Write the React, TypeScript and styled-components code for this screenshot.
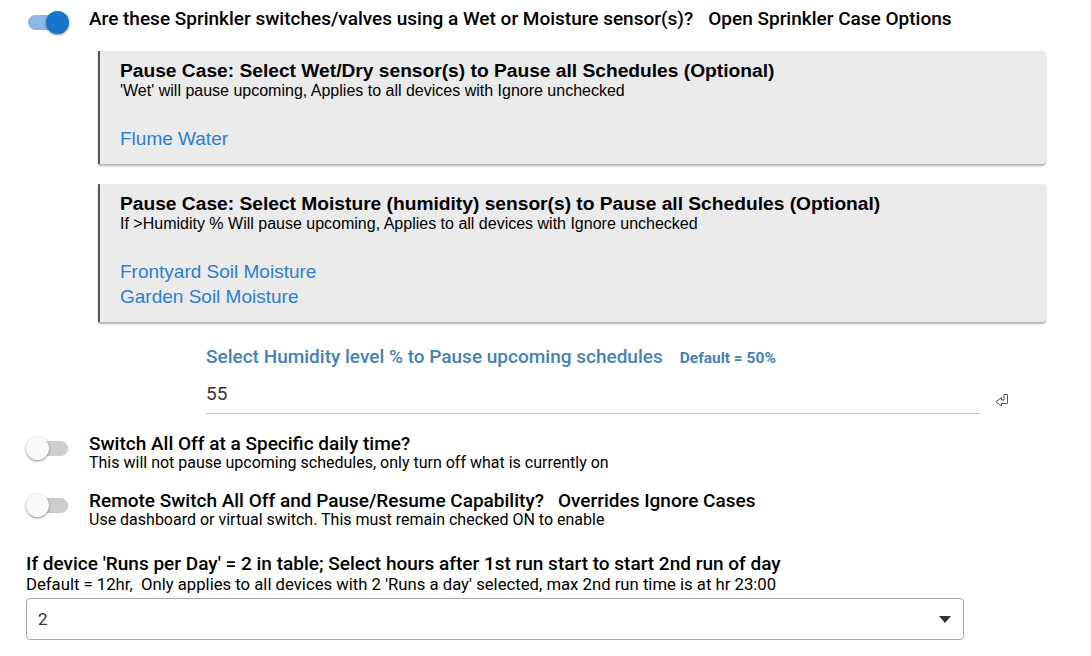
import styled, { createGlobalStyle } from 'styled-components'

const GlobalStyle = createGlobalStyle`
  body {
    margin: 0;
    background: #ffffff;
    font-family: Roboto, 'Liberation Sans', sans-serif;
    color: #000000;
  }
`

const Page = styled.div`
  width: 1091px;
  height: 656px;
  overflow: hidden;
  padding-top: 7px;
  box-sizing: border-box;
`

const SwitchRow = styled.div<{ $mt?: number }>`
  display: flex;
  align-items: flex-start;
  padding-left: 26px;
  margin-top: ${p => p.$mt ?? 0}px;
`

const Toggle = styled.div`
  position: relative;
  flex: none;
  width: 44px;
  height: 24px;
  margin-top: 3px;
  margin-right: 19px;
`

const Track = styled.div<{ $on?: boolean }>`
  position: absolute;
  left: 2px;
  top: 5px;
  width: 40px;
  height: 15px;
  border-radius: 8px;
  background: ${p => (p.$on ? '#8bb8e6' : '#cdcdcd')};
`

const Thumb = styled.div<{ $on?: boolean }>`
  position: absolute;
  top: 1px;
  left: ${p => (p.$on ? '20px' : '0px')};
  width: 23px;
  height: 23px;
  border-radius: 50%;
  background: ${p => (p.$on ? '#1a73cc' : '#fafafa')};
  box-shadow: 0 1px 3px rgba(0, 0, 0, 0.35), 0 1px 1px rgba(0, 0, 0, 0.14);
`

const SwitchText = styled.div`
  display: flex;
  flex-direction: column;
`

const SwitchTitle = styled.div<{ $lh?: number }>`
  font-size: 19px;
  font-weight: 500;
  line-height: ${p => p.$lh ?? 22}px;
  white-space: nowrap;
`

const Spacer = styled.span<{ $w: number }>`
  display: inline-block;
  width: ${p => p.$w}px;
`

const SwitchSub = styled.div`
  font-size: 16px;
  line-height: 16px;
  white-space: nowrap;
`

const Cards = styled.div`
  display: flex;
  flex-direction: column;
  gap: 20px;
  margin: 17px 0 0 98px;
  width: 948px;
`

const Card = styled.div`
  background: #ebebeb;
  border-left: 2px solid #555555;
  border-radius: 0 4px 4px 0;
  box-shadow: 0 2px 2px rgba(0, 0, 0, 0.3);
  padding: 9px 20px 13px 20px;
  font-family: 'Liberation Sans', Arial, sans-serif;
`

const CardTitle = styled.div`
  font-size: 19.2px;
  font-weight: 700;
  line-height: 21px;
  white-space: nowrap;
`

const CardSub = styled.div`
  font-size: 16px;
  line-height: 20px;
  white-space: nowrap;
`

const DeviceList = styled.div`
  margin-top: 25px;
  display: flex;
  flex-direction: column;
`

const Device = styled.div`
  font-size: 19px;
  line-height: 25px;
  color: #2a7fd4;
`

const Field = styled.div`
  margin: 23px 0 0 206px;
  display: flex;
  align-items: flex-end;
`

const FieldBody = styled.div`
  width: 774px;
`

const FieldLabel = styled.div`
  font-size: 19px;
  font-weight: 500;
  line-height: 24px;
  color: #4682b4;
  white-space: nowrap;
`

const FieldHint = styled.span`
  font-size: 15.5px;
  font-weight: 700;
  margin-left: 17px;
`

const FieldInput = styled.div`
  margin-top: 12px;
  font-size: 19px;
  line-height: 24px;
  color: #333333;
  padding-bottom: 7px;
  border-bottom: 1px solid #c0c0c0;
`

const EnterIcon = styled.svg`
  width: 14px;
  height: 14px;
  margin: 0 0 7px 15px;
`

const Section = styled.div`
  margin: 25px 0 0 26px;
`

const SectionTitle = styled.div`
  font-size: 19px;
  font-weight: 500;
  line-height: 22px;
  white-space: nowrap;
`

const SectionSub = styled.div`
  margin-top: 2px;
  font-size: 16.7px;
  line-height: 16px;
  white-space: pre;
`

const Select = styled.div`
  margin-top: 5px;
  width: 938px;
  height: 42px;
  box-sizing: border-box;
  border: 1px solid #a8a8a8;
  border-radius: 4px;
  display: flex;
  align-items: center;
  justify-content: space-between;
  padding: 0 12px 0 11px;
  font-size: 17px;
  color: #333333;
`

const Caret = styled.svg`
  width: 12px;
  height: 7px;
`

type SwitchProps = { on?: boolean }

function Switch({ on }: SwitchProps) {
  return (
    <Toggle>
      <Track $on={on} />
      <Thumb $on={on} />
    </Toggle>
  )
}

const cards = [
  {
    title: 'Pause Case: Select Wet/Dry sensor(s) to Pause all Schedules (Optional)',
    sub: "'Wet' will pause upcoming, Applies to all devices with Ignore unchecked",
    devices: ['Flume Water']
  },
  {
    title: 'Pause Case: Select Moisture (humidity) sensor(s) to Pause all Schedules (Optional)',
    sub: 'If >Humidity % Will pause upcoming, Applies to all devices with Ignore unchecked',
    devices: ['Frontyard Soil Moisture', 'Garden Soil Moisture']
  }
]

export default function App() {
  return (
    <Page>
      <GlobalStyle />
      <SwitchRow>
        <Switch on />
        <SwitchTitle $lh={24}>
          Are these Sprinkler switches/valves using a Wet or Moisture sensor(s)?<Spacer $w={15} />Open Sprinkler Case Options
        </SwitchTitle>
      </SwitchRow>

      <Cards>
        {cards.map(c => (
          <Card key={c.title}>
            <CardTitle>{c.title}</CardTitle>
            <CardSub>{c.sub}</CardSub>
            <DeviceList>
              {c.devices.map(d => (
                <Device key={d}>{d}</Device>
              ))}
            </DeviceList>
          </Card>
        ))}
      </Cards>

      <Field>
        <FieldBody>
          <FieldLabel>
            Select Humidity level % to Pause upcoming schedules<FieldHint>Default = 50%</FieldHint>
          </FieldLabel>
          <FieldInput>55</FieldInput>
        </FieldBody>
        <EnterIcon viewBox='0 0 14 14'>
          <polygon
            points='9,1.5 12.5,1.5 12.5,10.5 6.5,10.5 6.5,13 1,8.7 6.5,4.5 6.5,7 9,7'
            fill='#ffffff'
            stroke='#555555'
            strokeWidth='1'
          />
        </EnterIcon>
      </Field>

      <SwitchRow $mt={19}>
        <Switch />
        <SwitchText>
          <SwitchTitle>Switch All Off at a Specific daily time?</SwitchTitle>
          <SwitchSub>This will not pause upcoming schedules, only turn off what is currently on</SwitchSub>
        </SwitchText>
      </SwitchRow>

      <SwitchRow $mt={19}>
        <Switch />
        <SwitchText>
          <SwitchTitle>
            Remote Switch All Off and Pause/Resume Capability?<Spacer $w={14} />Overrides Ignore Cases
          </SwitchTitle>
          <SwitchSub>Use dashboard or virtual switch. This must remain checked ON to enable</SwitchSub>
        </SwitchText>
      </SwitchRow>

      <Section>
        <SectionTitle>
          If device 'Runs per Day' = 2 in table; Select hours after 1st run start to start 2nd run of day
        </SectionTitle>
        <SectionSub>Default = 12hr,  Only applies to all devices with 2 'Runs a day' selected, max 2nd run time is at hr 23:00</SectionSub>
        <Select>
          <span>2</span>
          <Caret viewBox='0 0 12 7'>
            <polygon points='0,0 12,0 6,7' fill='#333333' />
          </Caret>
        </Select>
      </Section>
    </Page>
  )
}
